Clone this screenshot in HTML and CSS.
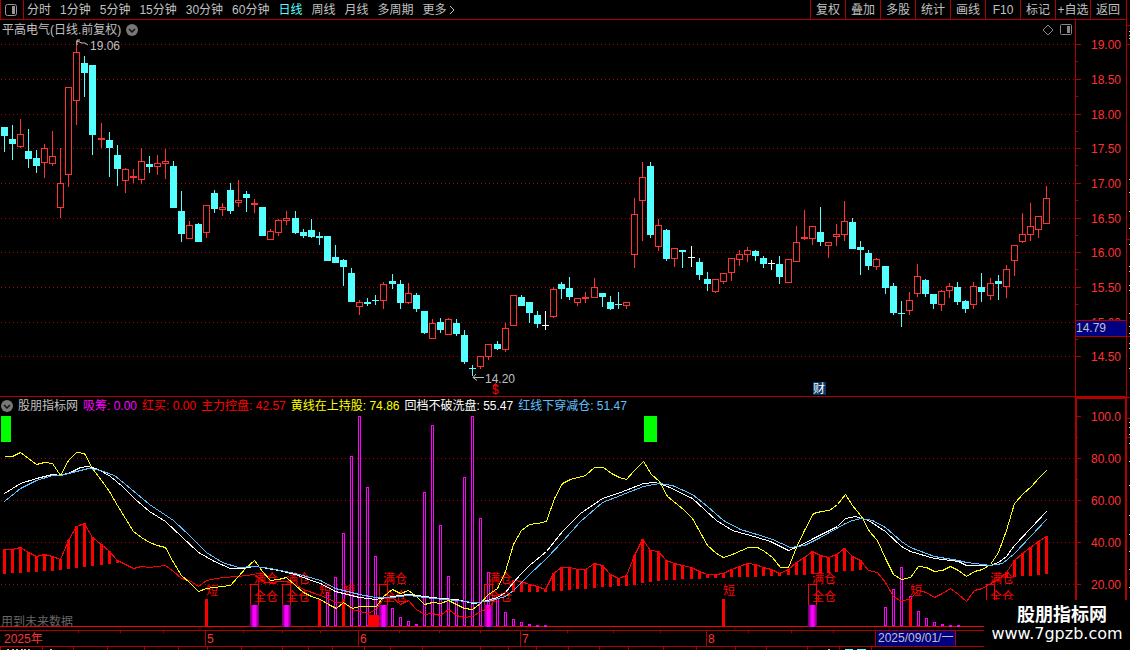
FILE: index.html
```html
<!DOCTYPE html>
<html lang="zh-CN">
<head>
  <meta charset="UTF-8">
  <meta name="viewport" content="width=device-width, initial-scale=1.0">
  <title>平高电气 日线</title>
  <link rel="stylesheet" href="styles.css">
</head>
<body>
  <div class="terminal">
    <header class="toolbar">
      <button class="layout-btn" aria-label="布局">
        <svg width="12" height="12" viewBox="0 0 12 12"><rect x="0.5" y="0.5" width="11" height="11" rx="2" fill="none" stroke="#999"/><rect x="7" y="2" width="3" height="8" fill="#999"/></svg>
      </button>
      <nav class="periods">
        <button>分时</button>
        <button>1分钟</button>
        <button>5分钟</button>
        <button>15分钟</button>
        <button>30分钟</button>
        <button>60分钟</button>
        <button class="active">日线</button>
        <button>周线</button>
        <button>月线</button>
        <button>多周期</button>
        <button class="more">更多<svg width="6" height="10" viewBox="0 0 6 10"><path d="M1 1l4 4l-4 4" fill="none" stroke="#c0c0c0"/></svg></button>
      </nav>
      <div class="tools">
        <button>复权</button>
        <button>叠加</button>
        <button>多股</button>
        <button>统计</button>
        <button>画线</button>
        <button>F10</button>
        <button>标记</button>
        <button>+自选</button>
        <button>返回</button>
      </div>
    </header>

    <section class="panel price-panel">
      <div class="panel-head title">
        <span>平高电气(日线.前复权)</span>
        <svg width="12" height="12" viewBox="0 0 12 12"><circle cx="6" cy="6" r="6" fill="#777"/><path d="M3 5l3 3l3-3" fill="none" stroke="#111" stroke-width="1.5"/></svg>
        <span class="head-icons">
          <svg width="12" height="12" viewBox="0 0 12 12"><path d="M6 1l5 5l-5 5l-5-5z" fill="none" stroke="#888"/></svg>
          <svg width="12" height="12" viewBox="0 0 12 12"><rect x="0.5" y="0.5" width="11" height="10" rx="1" fill="none" stroke="#888"/><rect x="7" y="2" width="3" height="7" fill="#888"/></svg>
        </span>
      </div>
      <svg class="price-plot" id="pricePlot"></svg>
    </section>
    <svg class="axis" id="priceAxis"></svg>

    <section class="panel indicator-panel">
      <div class="panel-head readout">
        <svg width="12" height="12" viewBox="0 0 12 12"><circle cx="6" cy="6" r="6" fill="#777"/><path d="M3 5l3 3l3-3" fill="none" stroke="#111" stroke-width="1.5"/></svg>
        <span>股朋指标网</span>
        <span class="magenta">吸筹: 0.00</span>
        <span class="red">红买: 0.00</span>
        <span class="red">主力控盘: 42.57</span>
        <span class="yellow">黄线在上持股: 74.86</span>
        <span class="white">回档不破洗盘: 55.47</span>
        <span class="blue">红线下穿减仓: 51.47</span>
      </div>
      <svg class="indicator-plot" id="indicatorPlot"></svg>
    </section>
    <svg class="axis indicator-axis" id="indicatorAxis"></svg>

    <svg class="time-axis" id="timeAxis"></svg>
    <svg class="bottom-strip" id="bottomStrip"></svg>
    <svg class="side-strip" id="sideStrip"></svg>

    <div class="watermark">
      <strong>股朋指标网</strong>
      <span>www.7gpzb.com</span>
    </div>
  </div>

  <script src="chart.js"></script>
</body>
</html>
```
FILE: styles.css
```css
* {
  box-sizing: border-box;
}

body {
  margin: 0;
  background-color: #000;
  color: #c0c0c0;
  font-family: "Liberation Sans", "Noto Sans CJK SC", sans-serif;
  font-size: 12px;
  line-height: 16px;
}

svg {
  display: block;
}

button {
  font: inherit;
  color: inherit;
  background: none;
  border: none;
  padding: 0;
  white-space: nowrap;
  cursor: pointer;
}

.terminal {
  position: relative;
  display: grid;
  grid-template-columns: minmax(0, 1fr) 52px 3px;
  overflow: hidden;
}

/* toolbar */
.toolbar {
  grid-column: 1 / 3;
  display: flex;
  height: 20px;
  border-bottom: 1px solid #b00000;
  border-right: 1px solid #b00000;
}

.layout-btn {
  width: 24px;
  padding-left: 4px;
  border-left: 1px solid #b00000;
  border-right: 1px solid #b00000;
}

.periods {
  display: flex;
  gap: 9px;
  padding-left: 3px;
}

.periods .active {
  color: #54ffff;
}

.more {
  display: flex;
  align-items: center;
  gap: 2px;
}

.tools {
  display: grid;
  grid-template-columns: repeat(9, 35px);
  margin-left: auto;
  padding-right: 1px;
}

.tools button {
  border-left: 1px solid #b00000;
}

/* chart panels */
.panel {
  grid-column: 1;
  min-width: 0;
}

.panel-head {
  display: flex;
  align-items: center;
  gap: 5px;
  height: 18px;
  padding-left: 2px;
  white-space: nowrap;
}

.title {
  padding-top: 2px;
}

.head-icons {
  display: flex;
  gap: 6px;
  margin-left: auto;
  padding-right: 3px;
}

.readout {
  height: 17px;
  padding-left: 1px;
}

.price-panel {
  border-bottom: 1px solid #b00000;
}

.price-plot {
  width: 100%;
  height: 358px;
}

.indicator-plot {
  width: 100%;
  height: 216px;
}

.axis {
  grid-column: 2;
  width: 100%;
  height: 100%;
}

.magenta { color: #f0f; }
.red { color: #f00; }
.yellow { color: #ff0; }
.white { color: #fff; }
.blue { color: #60c0ff; }

.time-axis {
  grid-column: 1 / 3;
  width: 100%;
  height: 17px;
}

.bottom-strip {
  grid-column: 1 / 3;
  width: 100%;
  height: 3px;
}

.side-strip {
  grid-column: 3;
  grid-row: 1 / 6;
  width: 3px;
  height: 100%;
}

svg text {
  font-size: 12px;
}

.watermark {
  position: absolute;
  right: 0;
  bottom: 0;
  width: 146px;
  height: 50px;
  padding-top: 5px;
  background-color: #000;
  color: #fff;
  text-align: center;
}

.watermark strong {
  display: block;
  padding-left: 10px;
  font-size: 18px;
  line-height: 20px;
}

.watermark span {
  display: block;
  font-family: "DejaVu Sans", sans-serif;
  font-size: 16px;
  line-height: 18px;
}
```
FILE: chart.js
```javascript
const LINE = '#b00000';
const UP = '#ff3232';
const DOWN = '#54ffff';

// type, high, body top, body bottom, low
const candles = `
D 127 127 136 152|D 125 139 144 160|U 119 134 147 148|D 129 151 159 168|D 150 158 166 173
U 144 148 163 178|U 131 156 164 166|U 148 183 208 218|U 87 87 175 187|U 41 52 101 125
D 56 63 73 97|D 65 65 135 155|U 123 138 140 148|D 132 140 148 177|D 145 155 169 186
U 168 169 181 193|U 169 176 178 183|U 148 161 180 184|D 156 164 167 173|U 155 163 167 175
U 149 161 164 179|D 161 166 208 208|D 191 211 234 242|U 221 225 239 239|D 223 224 242 242
U 205 205 233 238|D 190 193 209 213|U 203 207 210 216|D 183 190 211 214|U 180 200 203 207
D 191 194 198 212|U 199 203 205 213|D 207 207 236 236|U 229 231 240 240|U 219 220 233 236
U 211 218 221 225|D 211 218 233 234|D 229 232 236 238|D 219 230 237 238|D 232 236 238 245
D 236 236 261 261|D 245 257 263 263|D 259 260 267 286|D 268 273 302 302|U 300 302 307 315
D 298 302 304 306|D 295 300 301 305|U 282 284 301 309|D 274 281 284 289|D 280 284 303 309
U 283 293 303 304|D 293 295 309 312|D 311 311 333 334|U 319 323 339 339|D 318 322 330 333
U 318 319 335 335|D 319 323 334 336|D 330 335 362 364|D 365 368 369 376|U 356 356 367 369
U 344 344 357 360|D 341 344 349 350|U 323 328 350 352|U 295 295 326 326|D 295 297 306 306
D 302 302 313 323|D 311 315 324 328|W 311 325 326 330|U 287 289 317 318|D 282 284 289 299
D 277 288 297 300|U 298 298 303 306|U 292 297 299 303|U 278 287 298 298|D 293 293 297 307
D 296 302 309 310|D 292 304 305 309|U 302 302 306 309|U 198 214 255 268|U 162 177 201 241
D 162 166 235 238|U 219 225 247 251|D 229 230 259 261|U 248 248 259 267|D 250 250 252 268
W 246 257 258 267|D 258 262 275 280|D 272 279 284 291|U 279 279 292 293|U 273 273 282 284
U 258 258 273 281|U 250 254 260 266|U 247 250 255 262|D 250 251 256 261|D 256 258 264 268
W 260 263 264 270|D 256 264 277 284|U 259 259 283 283|U 226 242 262 262|U 210 237 239 240
U 226 226 239 245|D 207 232 242 246|U 242 242 246 258|U 224 234 237 246|U 201 221 235 241
D 218 222 249 249|D 241 247 250 275|D 250 253 266 270|U 258 259 267 270|D 266 266 288 294
D 283 286 313 315|D 301 313 314 327|U 292 300 311 315|U 264 276 294 297|D 279 280 294 297
D 294 294 304 309|U 290 291 305 311|U 283 286 291 298|D 282 287 302 305|D 300 301 309 313
U 282 286 305 309|D 273 287 292 302|U 278 283 296 300|D 275 281 284 300|U 265 269 287 298
U 245 245 261 276|U 213 234 242 243|U 203 226 235 241|U 216 216 230 238|U 186 198 224 224
`.trim().split(/[|\n]/).map(row => row.split(' '));

const yellowLine = '4,456 12,456 20,452 28,458 36,464 44,462 52,463 60,475 68,460 76,452 84,453 92,468 101,480 109,491 117,505 125,518 133,531 141,537 149,542 157,545 165,547 173,562 181,575 189,582 198,591 206,588 230,585 238,576 246,567 254,560 262,571 270,580 278,579 286,577 295,585 303,592 311,596 320,599 328,604 336,608 343,602 352,608 359,606 376,606 383,596 392,589 400,593 408,590 416,596 424,604 432,602 440,603 448,600 456,604 464,608 472,609 480,603 488,594 497,588 505,571 513,544 521,530 529,524 537,523 546,521 554,498 562,483 570,479 585,475 594,467 603,467 611,473 619,477 626,479 634,470 643,461 651,474 659,481 667,496 683,509 692,518 707,545 716,553 723,557 732,554 741,550 748,547 757,547 764,551 772,557 780,567 788,567 796,547 804,530 813,513 821,511 829,510 837,504 845,494 852,505 861,516 869,531 877,540 885,558 893,574 901,579 910,577 918,566 926,567 934,571 942,570 950,566 958,570 966,576 974,571 982,569 990,564 998,552 1006,530 1014,503 1023,493 1031,486 1038,478 1046,470';
const whiteLine = '4,493 20,483 36,478 52,474 60,475 70,472 80,467 88,466 98,469 110,476 122,486 135,499 149,511 165,521 181,536 198,552 214,561 230,568 241,568 254,566 262,567 278,570 295,574 311,580 320,583 335,591 359,597 375,599 392,596 408,594 424,596 440,598 456,599 473,603 480,602 497,597 505,592 513,582 521,573 529,565 546,551 562,531 580,513 602,498 620,492 643,483 655,482 667,486 692,498 716,520 732,530 757,537 770,541 788,550 800,545 813,538 837,526 845,518 855,516 868,520 885,531 901,546 910,551 934,558 958,561 966,565 990,565 998,562 1006,556 1014,545 1030,528 1046,511';
const blueLine = '4,501 20,488 36,480 52,475 60,475 76,471 88,468 100,470 114,475 130,488 149,504 173,520 190,536 206,552 222,562 238,567 254,566 270,568 295,573 320,580 335,588 359,594 375,597 392,597 408,595 432,598 456,600 473,602 488,601 505,596 513,590 529,574 546,558 562,541 580,521 602,502 620,495 643,486 659,483 672,485 692,494 707,506 723,520 740,529 760,535 772,539 790,547 804,545 820,537 845,523 852,520 861,518 872,520 885,527 901,541 910,547 934,556 958,560 966,562 990,565 1002,563 1014,553 1030,536 1046,519';
const redLine = '4,549 12,549 20,547 28,552 36,556 44,554 52,556 60,559 68,540 76,526 84,523 92,537 101,544 109,551 117,560 125,564 133,568 141,566 149,567 157,566 165,565 173,571 181,578 189,580 198,586 206,580 222,577 238,576 254,574 264,582 286,581 295,584 303,589 320,595 336,602 343,602 352,609 367,613 376,609 383,598 392,597 400,604 408,600 416,609 424,614 432,613 440,615 448,609 456,615 464,617 472,616 480,611 488,608 497,595 505,592 513,580 521,581 529,584 537,586 545,589 553,573 561,567 570,567 577,569 585,569 594,563 602,565 610,574 618,578 626,575 634,555 642,539 650,550 658,551 666,560 674,563 682,565 691,567 699,571 707,574 715,574 723,573 731,569 739,566 747,563 755,564 763,567 771,569 779,573 788,569 796,562 804,557 812,551 820,555 828,557 836,554 844,548 852,556 860,560 868,570 877,572 885,582 893,596 901,601 910,598 918,590 926,592 934,597 942,593 950,588 958,594 966,601 974,590 982,588 990,583 998,579 1006,572 1014,560 1022,553 1030,547 1038,541 1046,536';
const redBase = '4,574 60,570 68,569 109,564 117,563 125,563 505,592 545,592 570,590 602,587 626,586 650,582 666,580 691,579 715,578 739,577 771,576 796,575 812,574 860,570 868,570 998,578 1006,578 1046,574';

// x of bar, top
const chipBars = '327,592 335,577 343,533 351,456 359,416 367,487 375,556 392,608 400,617 408,621 416,624 424,492 432,425 440,525 448,576 456,601 464,477 472,416 480,518 488,572 497,598 505,612 513,619 521,622 529,624 537,625 545,625 885,607 893,589 901,567 910,596 918,611 926,618 934,622 942,624 950,625 958,625';
const fullMarks = [254, 286, 383, 488, 812, 990];
const shortMarks = [206, 319, 343, 723, 910];

function candleX(i) {
  return Math.floor(4.07 + 8.082 * i);
}

function points(str) {
  return str.split(' ').map(p => p.split(',').map(Number));
}

function valueAt(pts, x) {
  for (let i = 1; i < pts.length; i++) {
    if (x <= pts[i][0]) {
      const [x0, y0] = pts[i - 1];
      const [x1, y1] = pts[i];
      return Math.round(y0 + (y1 - y0) * (x - x0) / (x1 - x0));
    }
  }
  return pts[pts.length - 1][1];
}

function rect(x, y, w, h, fill) {
  return `<rect x="${x}" y="${y}" width="${w}" height="${h}" fill="${fill}"/>`;
}

function box(x, y, w, h, stroke, fill = '#000') {
  return `<rect x="${x + 0.5}" y="${y + 0.5}" width="${w - 1}" height="${h - 1}" fill="${fill}" stroke="${stroke}"/>`;
}

function text(x, y, str, fill, extra = '') {
  return `<text x="${x}" y="${y}" fill="${fill}" ${extra}>${str}</text>`;
}

function gridLine(y) {
  return `<line x1="1" x2="100%" y1="${y + 0.5}" y2="${y + 0.5}" stroke="${LINE}" stroke-dasharray="1 3"/>`;
}

function curve(str, color) {
  return `<polyline points="${str}" transform="translate(0.5 0.5)" fill="none" stroke="${color}" shape-rendering="crispEdges"/>`;
}

function draw(id, dx, dy, html) {
  document.getElementById(id).innerHTML = `<g transform="translate(${dx} ${dy})">${html}</g>`;
}

function drawPrice() {
  let html = [44, 79, 114, 148, 183, 218, 252, 287, 322, 356].map(gridLine).join('');
  candles.forEach(([type, ...v], i) => {
    const [high, top, bottom, low] = v.map(Number);
    const x = candleX(i);
    const color = type === 'U' ? UP : type === 'D' ? DOWN : '#fff';
    html += rect(x, high, 1, low - high, color);
    html += type === 'U' ? box(x - 3, top, 7, bottom - top, color) : rect(x - 3, top, 7, bottom - top, color);
  });
  html += '<path d="M77 45v-5h3M77 41l5 2h3l3 2" fill="none" stroke="#c0c0c0"/>';
  html += text(90, 50, '19.06', '#c0c0c0');
  html += '<path d="M484 377.5h-11M476 374l-3 3.5l4 3" fill="none" stroke="#c0c0c0"/>';
  html += text(485, 383, '14.20', '#c0c0c0');
  html += '<path d="M495.500 383l3 3h-6z" fill="#f00"/>';
  html += text(492, 394, '$', '#f00', 'class="signal"');
  html += rect(813, 382, 13, 13, '#043868') + text(813, 393, '财', '#fff');
  draw('pricePlot', 0, -38, html);
}

function drawPriceAxis() {
  let html = rect(1075, 20, 1, 377, LINE) + rect(1126, 20, 1, 377, LINE) + rect(1075, 396, 52, 1, LINE);
  [44, 79, 114, 148, 183, 218, 252, 287, 322, 356].forEach((y, i) => {
    html += rect(1076, y, 5, 1, LINE);
    if (i < 9) html += rect(1076, y + 17, 2, 1, LINE);
    html += text(1121, y + 5, (19 - i * 0.5).toFixed(2), UP, 'text-anchor="end"');
  });
  // current price sits over the scale
  html += rect(1076, 320, 50, 17, LINE) + rect(1076, 321, 50, 15, '#000080');
  html += text(1076, 332, '14.79', '#c0c0c0');
  draw('priceAxis', -1075, -20, html);
}

function drawIndicator() {
  let html = [458, 500, 542, 584].map(gridLine).join('');
  html += text(1, 626, '用到未来数据', '#666');
  html += `<rect x="0" y="626" width="100%" height="1" fill="#f00"/>`;
  html += rect(1, 416, 10, 26, '#0f0') + rect(644, 416, 13, 26, '#0f0');

  points(chipBars).forEach(([x, top]) => {
    html += box(x - 1, top, 3, Math.max(626 - top, 2), '#f0f');
  });

  const tops = points(redLine);
  const base = points(redBase);
  candles.forEach((c, i) => {
    const x = candleX(i);
    const top = valueAt(tops, x);
    const bottom = valueAt(base, x);
    if (bottom > top && (x < 120 || (x > 510 && x < 865) || x > 1000)) {
      html += rect(x - 1, top, 3, bottom - top, '#f00');
    }
  });

  html += rect(368, 615, 12, 12, '#f00');
  shortMarks.forEach(x => {
    html += rect(x - 1, 599, 3, 28, '#f00') + text(x, 595, '短', '#f00');
  });
  fullMarks.forEach(x => {
    html += box(x - 4, 584, 9, 43, '#f00', 'none');
    html += rect(x - 4, 605, 9, 22, 'url(#glow)');
    html += text(x, 583, '满仓', '#f00') + text(x, 601, '全仓', '#f00');
  });

  html += curve(redLine, '#f00') + curve(yellowLine, '#ff0') + curve(whiteLine, '#fff') + curve(blueLine, '#60c0ff');
  html += '<defs><linearGradient id="glow"><stop offset="0" stop-color="#600060"/><stop offset="0.4" stop-color="#f0f"/><stop offset="0.6" stop-color="#f0f"/><stop offset="1" stop-color="#600060"/></linearGradient></defs>';
  draw('indicatorPlot', 0, -414, html);
}

function drawIndicatorAxis() {
  let html = rect(1075, 397, 52, 2, LINE) + rect(1075, 397, 2, 233, LINE) + rect(1125, 397, 2, 233, LINE);
  ['100.0', '80.00', '60.00', '40.00', '20.00'].forEach((label, i) => {
    const y = 416 + i * 42;
    html += rect(1077, y, 4, 1, LINE) + rect(1077, y + 21, 1, 1, LINE);
    html += text(1121, y + 5, label, UP, 'text-anchor="end"');
  });
  draw('indicatorAxis', -1075, -397, html);
}

function drawTimeAxis() {
  let html = `<rect x="0" y="630" width="100%" height="1" fill="${LINE}"/><rect x="0" y="646" width="100%" height="1" fill="${LINE}"/>`;
  [78, 120, 163, 243, 282, 320, 399, 439, 480, 567, 613, 660, 748, 791, 833].forEach(x => {
    html += rect(x, 631, 1, 2, LINE);
  });
  html += text(4, 643, '2025年', UP);
  [[205, '5'], [358, '6'], [520, '7'], [706, '8']].forEach(([x, month]) => {
    html += rect(x, 631, 1, 15, LINE) + text(x + 2, 643, month, UP);
  });
  html += rect(875, 631, 1, 15, LINE) + rect(877, 631, 78, 15, '#000080') + rect(955, 631, 1, 15, LINE);
  html += text(878, 642, '2025/09/01/一', '#c0c0c0');
  draw('timeAxis', 0, -630, html);
}

function drawStrips() {
  let html = '';
  [0, 42, 73, 107, 144, 178, 207, 241, 282, 308, 332, 364, 390, 422, 480, 508, 536, 568, 599, 628, 663, 696, 735, 766, 807, 839, 871].forEach(x => {
    html += rect(x, 0, 1, 3, LINE);
  });
  [7, 12, 16, 21, 24, 28, 50, 828].forEach(x => {
    html += rect(x, 2, 2, 1, '#c0c0c0');
  });
  html += rect(845, 2, 8, 1, DOWN) + rect(857, 2, 9, 1, DOWN);
  draw('bottomStrip', 0, 0, html);

  html = '';
  [25, 44, 239, 336, 397, 418, 437].forEach(y => {
    html += rect(0, y, 3, 1, LINE);
  });
  [31, 35, 38, 179, 192, 211, 228, 244, 266, 271, 285, 290, 313, 326, 333, 343, 348, 368, 422, 427, 434, 443, 461, 485, 515, 534, 551, 569, 587].forEach(y => {
    html += rect(2, y, 1, 1, '#c0c0c0');
  });
  draw('sideStrip', 0, 0, html);
}

drawPrice();
drawPriceAxis();
drawIndicator();
drawIndicatorAxis();
drawTimeAxis();
drawStrips();
```
